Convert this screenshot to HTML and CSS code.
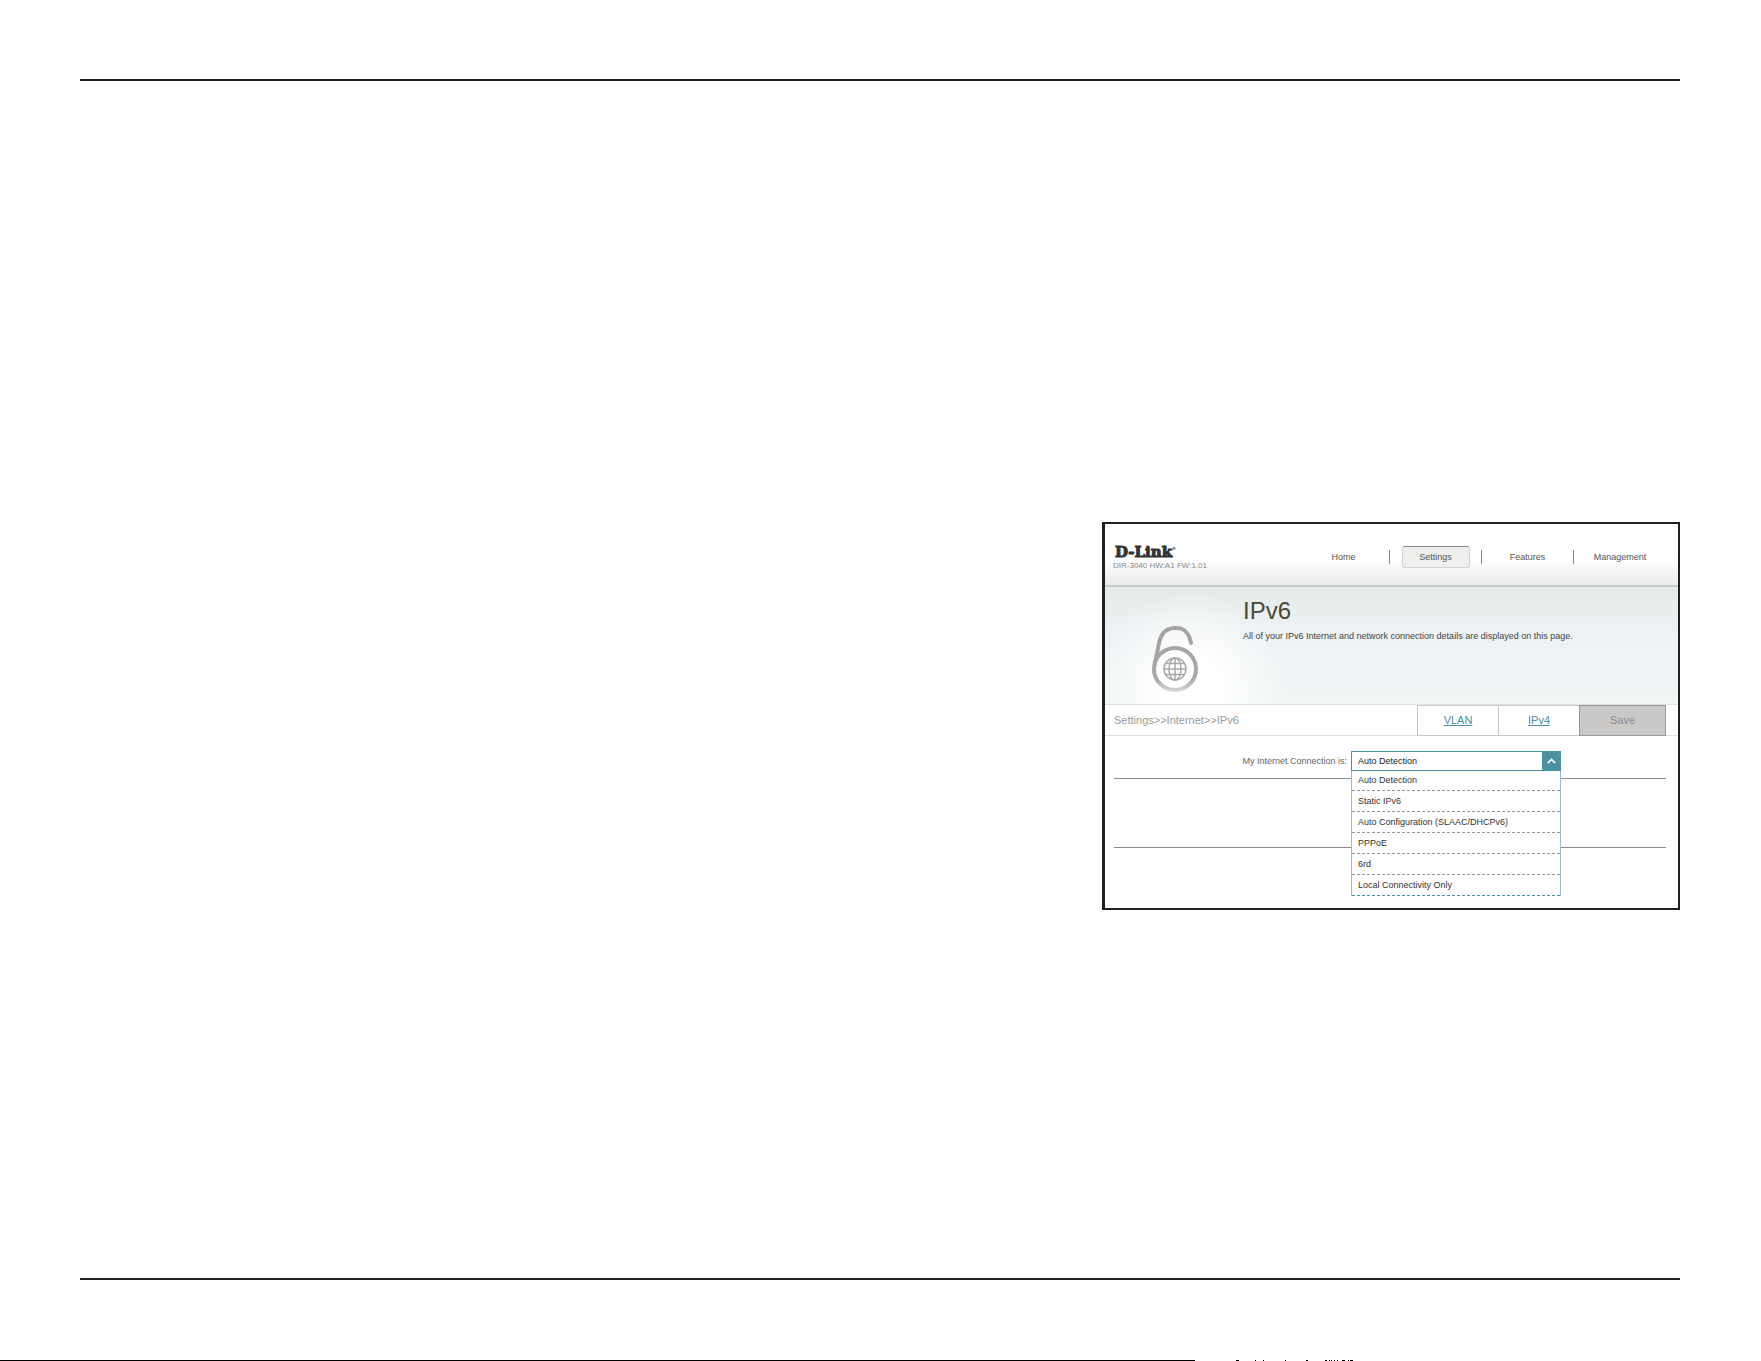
FILE: index.html
```html
<!DOCTYPE html>
<html lang="en">
<head>
<meta charset="utf-8">
<title>IPv6</title>
<link rel="stylesheet" href="styles.css">
</head>
<body>
<div class="sheet">
  <main class="content">
    <section class="router">
      <header class="topbar">
        <div class="brand">
          <div class="logo">D-Link<sup class="reg">®</sup></div>
          <div class="model">DIR-3040 HW:A1 FW:1.01</div>
        </div>
        <nav>
          <ul class="menu">
            <li><a href="#home">Home</a></li>
            <li><a class="current" href="#settings">Settings</a></li>
            <li><a href="#features">Features</a></li>
            <li><a href="#management">Management</a></li>
          </ul>
        </nav>
      </header>
      <div class="banner">
        <svg class="lock" viewBox="0 0 48 68" aria-hidden="true">
          <defs>
            <linearGradient id="metal" gradientUnits="userSpaceOnUse" x1="0" y1="0" x2="0" y2="68">
              <stop offset="0" stop-color="#a3a3a3"/>
              <stop offset=".8" stop-color="#a9a9a9"/>
              <stop offset="1" stop-color="#dcdcdc"/>
            </linearGradient>
          </defs>
          <g fill="none" stroke="url(#metal)">
            <circle cx="24" cy="44" r="21" stroke-width="4"/>
            <path d="M3.500 40 L8.500 16 C12 3 21 3 25 3 C34 3 38 8 40 18" stroke-width="4" stroke-linecap="round"/>
            <g stroke-width="1.500">
              <circle cx="24" cy="44" r="11"/>
              <ellipse cx="24" cy="44" rx="6" ry="11"/>
              <path d="M24 33V55M13 44H35M15 38.500H33M15 49.500H33"/>
            </g>
          </g>
        </svg>
        <div class="intro">
          <h1>IPv6</h1>
          <p>All of your IPv6 Internet and network connection details are displayed on this page.</p>
        </div>
      </div>
      <div class="toolbar">
        <div class="crumbs">Settings&gt;&gt;Internet&gt;&gt;IPv6</div>
        <div class="actions">
          <a href="#vlan">VLAN</a>
          <a href="#ipv4">IPv4</a>
          <button type="button">Save</button>
        </div>
      </div>
      <form class="form">
        <div class="field">
          <label for="connection">My Internet Connection is:</label>
          <div class="picker">
            <select id="connection">
              <option>Auto Detection</option>
            </select>
            <svg class="arrow" viewBox="0 0 18 18" aria-hidden="true"><path d="M5.500 11 9 7.500 12.500 11" fill="none" stroke="#fff" stroke-width="1.500"/></svg>
            <ul class="options">
              <li>Auto Detection</li>
              <li>Static IPv6</li>
              <li>Auto Configuration (SLAAC/DHCPv6)</li>
              <li>PPPoE</li>
              <li>6rd</li>
              <li>Local Connectivity Only</li>
            </ul>
          </div>
        </div>
        <hr>
        <hr>
      </form>
    </section>
  </main>
  <footer class="foot">
    <svg class="edge" viewBox="0 0 1761 1" preserveAspectRatio="none" shape-rendering="crispEdges" aria-hidden="true">
      <path d="M0 0H1195V1H0ZM1236 0h3v1h-3ZM1255 0h1v1h-1ZM1263 0h1v1h-1ZM1285 0h1v1h-1ZM1306 0h2v1h-2ZM1325 0h2v1h-2ZM1329 0h1v1h-1ZM1331 0h1v1h-1ZM1334 0h1v1h-1ZM1337 0h1v1h-1ZM1342 0h3v1h-3ZM1348 0h1v1h-1ZM1350 0h3v1h-3Z"/>
    </svg>
  </footer>
</div>
</body>
</html>
```
FILE: styles.css
```css
* {
  box-sizing: border-box;
}

body {
  margin: 0;
  background: #fff;
  color: #444;
  font-family: "Liberation Sans", Arial, sans-serif;
  font-size: 9px;
  line-height: 12px;
}

h1, p, ul {
  margin: 0;
  padding: 0;
}

ul {
  list-style: none;
}

a {
  color: inherit;
  text-decoration: none;
}

.sheet {
  display: flex;
  flex-direction: column;
  min-height: 100vh;
  padding-top: 79px;
}

.content {
  flex: 1;
  display: grid;
  grid-template-columns: 1022fr 578fr;
  align-items: start;
  margin: 0 81px 0 80px;
  padding-top: 441px;
  border-top: 2px solid #231f20;
  border-bottom: 2px solid #231f20;
}

.foot {
  display: flex;
  align-items: flex-end;
  height: 81px;
}

.edge {
  display: block;
  width: 100%;
  height: 1px;
}

.router {
  grid-column: 2;
  border: 2px solid #231f20;
  border-left-width: 3px;
}

.topbar {
  display: flex;
  justify-content: space-between;
  height: 63px;
  padding: 20px 12px 0 8px;
  border-bottom: 2px solid #c6cac9;
  background: linear-gradient(#fff 55%, #ececec);
}

.logo {
  padding-left: 2px;
  color: #333;
  font-family: "DejaVu Serif", serif;
  font-size: 15px;
  font-weight: bold;
  line-height: 16px;
  -webkit-text-stroke: 1px #333;
}

.reg {
  font-size: 4px;
  line-height: 0;
  vertical-align: 7px;
  -webkit-text-stroke: 0;
}

.model {
  color: #8a8a8a;
  font-size: 8px;
}

.menu {
  display: grid;
  grid-template-columns: repeat(4, 92px);
  padding-top: 6px;
}

.menu li {
  display: flex;
  align-items: center;
  justify-content: center;
  height: 14px;
  border-right: 1px solid #888;
  color: #555;
}

.menu li:last-child {
  border-right: 0;
}

.menu .current {
  width: 68px;
  padding: 4px 0;
  border: 1px solid #d2d2d2;
  border-top-color: #888;
  border-radius: 3px;
  background: #efefee;
  text-align: center;
}

.banner {
  display: flex;
  height: 118px;
  padding: 8px 0 0 46px;
  border-bottom: 1px solid #dfe3e3;
  background:
    radial-gradient(circle at 85px 100px, #fff 30px, rgba(255, 255, 255, 0) 95px),
    linear-gradient(#e6eaea, #edf2f4 40%, #f0f6f6);
}

.lock {
  width: 48px;
  height: 68px;
  margin: 30px 44px 0 0;
}

.intro h1 {
  color: #4a4a36;
  font-size: 24px;
  font-weight: normal;
  line-height: 32px;
}

.intro p {
  padding-top: 3px;
}

.toolbar {
  display: flex;
  justify-content: space-between;
  height: 31px;
  padding: 0 12px 0 9px;
  border-bottom: 1px solid #dfe0e0;
  color: #999;
  font-size: 11px;
  line-height: 31px;
}

.actions {
  display: grid;
  grid-template-columns: 81px 81px 87px;
  height: 31px;
}

.actions a {
  border: 1px solid #c6c6c6;
  border-right: 0;
  color: #4b8fa1;
  line-height: 29px;
  text-align: center;
  text-decoration: underline;
}

.actions button {
  padding: 0;
  border: 1px solid #999;
  background: #cac9c8;
  color: #888;
  font: inherit;
  line-height: 29px;
}

.form {
  padding: 15px 12px 60px 9px;
}

.field {
  display: flex;
  justify-content: flex-end;
  align-items: center;
  gap: 4px;
  padding-right: 105px;
}

.field label {
  color: #666;
}

.picker {
  position: relative;
  width: 210px;
}

.picker select {
  display: block;
  width: 100%;
  height: 20px;
  padding: 0 6px;
  appearance: none;
  border: 1px solid #4b91a0;
  border-radius: 0;
  background: #fff;
  color: #222;
  font: inherit;
}

.arrow {
  position: absolute;
  top: 0;
  right: 0;
  width: 19px;
  height: 20px;
  background: #4b91a0;
}

.options {
  position: absolute;
  top: 100%;
  right: 0;
  left: 0;
  border: solid #8fc0c8;
  border-width: 0 1px;
  background: #fff;
  color: #333;
}

.options li {
  height: 21px;
  padding: 0 6px;
  border-bottom: 1px dashed #999;
  line-height: 20px;
}

.options li:first-child {
  height: 20px;
  line-height: 19px;
}

.options li:last-child {
  border-bottom-color: #4b91a0;
}

.form hr {
  margin: 7px 0 0;
  border: 0;
  border-top: 1px solid #8c8c8c;
}

.form hr + hr {
  margin-top: 68px;
}
```
